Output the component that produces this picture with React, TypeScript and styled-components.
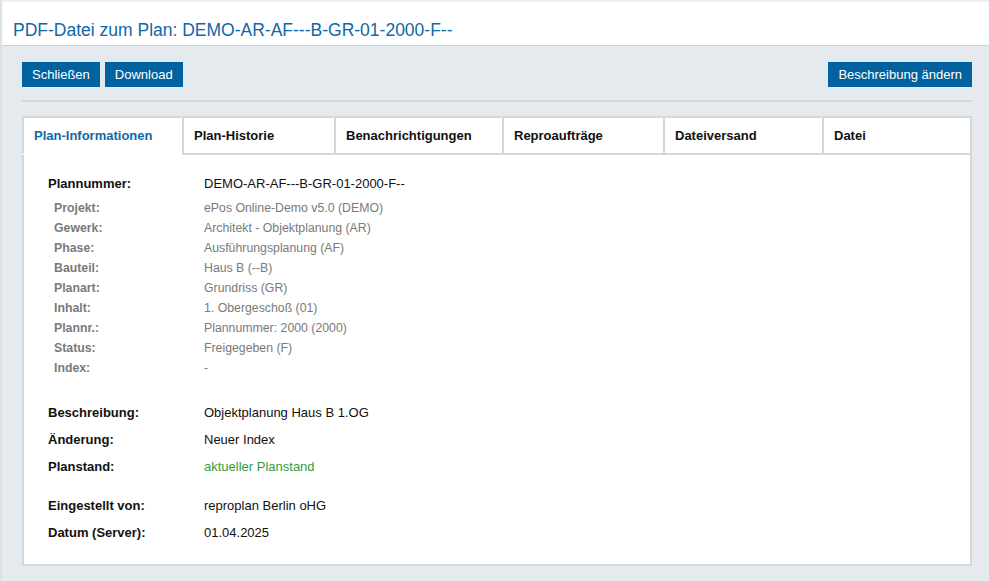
import React from "react";
import styled, { createGlobalStyle } from "styled-components";

const GlobalStyle = createGlobalStyle`
  html, body {
    margin: 0;
    padding: 0;
    background: #e5eaee;
    font-family: "Liberation Sans", Arial, sans-serif;
    font-size: 13px;
  }
`;

const Page = styled.div`
  min-height: 581px;
  border-left: 2px solid #dde1e4;
  box-sizing: border-box;
`;

const Header = styled.header`
  height: 46px;
  background: #fff;
  border-bottom: 1px solid #cdd2d6;
  box-shadow: inset 0 3px 3px -2px #e2e2e2;
  display: flex;
  align-items: center;
  padding: 15px 0 0 11px;
  box-sizing: border-box;
`;

const Title = styled.h1`
  margin: 0;
  font-size: 17.5px;
  font-weight: normal;
  color: #0f68a8;
`;

const Main = styled.main`
  padding: 16px 17px 16px 20px;
`;

const Toolbar = styled.div`
  display: flex;
  align-items: center;
  gap: 5px;
  padding-bottom: 13px;
  border-bottom: 2px solid #d3d7db;
`;

const Spacer = styled.div`
  flex: 1;
`;

const Button = styled.button`
  height: 25px;
  padding: 0 10px;
  border: none;
  border-radius: 0;
  background: #00639f;
  color: #fff;
  font-family: inherit;
  font-size: 13px;
  cursor: pointer;
`;

const Panel = styled.section`
  margin-top: 14px;
  background: #fff;
  border: 2px solid #d4d8db;
  border-top: none;
`;

const TabBar = styled.div`
  display: flex;
  margin-left: -2px;
  margin-right: -2px;
`;

const Tab = styled.div<{ $active?: boolean; $w: number }>`
  width: ${(p) => p.$w}px;
  height: 39px;
  box-sizing: border-box;
  display: flex;
  align-items: center;
  padding-left: 10px;
  font-weight: bold;
  font-size: 13px;
  color: ${(p) => (p.$active ? "#0f68a8" : "#111")};
  border-top: 2px solid #d4d8db;
  border-left: 2px solid #d4d8db;
  border-bottom: 2px solid ${(p) => (p.$active ? "transparent" : "#d4d8db")};
  background: #fff;
  &:last-child {
    flex: 1;
    border-right: 2px solid #d4d8db;
  }
`;

const Content = styled.div`
  padding: 16px 24px 18px 24px;
`;

const Group = styled.div<{ $gap?: number }>`
  margin-top: ${(p) => p.$gap ?? 0}px;
`;

const Row = styled.div<{ $h: number; $sub?: boolean }>`
  display: grid;
  grid-template-columns: ${(p) => (p.$sub ? "150px" : "156px")} 1fr;
  height: ${(p) => p.$h}px;
  align-items: center;
  padding-left: ${(p) => (p.$sub ? 6 : 0)}px;
  font-size: ${(p) => (p.$sub ? 12.3 : 13)}px;
  color: ${(p) => (p.$sub ? "#7a7a7a" : "#111")};
`;

const Label = styled.span`
  font-weight: bold;
`;

const Value = styled.span<{ $green?: boolean }>`
  color: ${(p) => (p.$green ? "#2ea043" : "inherit")};
`;

const tabs = [
  { label: "Plan-Informationen", w: 160, active: true },
  { label: "Plan-Historie", w: 152 },
  { label: "Benachrichtigungen", w: 168 },
  { label: "Reproaufträge", w: 161 },
  { label: "Dateiversand", w: 159 },
  { label: "Datei", w: 149 },
];

const details: [string, string][] = [
  ["Projekt:", "ePos Online-Demo v5.0 (DEMO)"],
  ["Gewerk:", "Architekt - Objektplanung (AR)"],
  ["Phase:", "Ausführungsplanung (AF)"],
  ["Bauteil:", "Haus B (--B)"],
  ["Planart:", "Grundriss (GR)"],
  ["Inhalt:", "1. Obergeschoß (01)"],
  ["Plannr.:", "Plannummer: 2000 (2000)"],
  ["Status:", "Freigegeben (F)"],
  ["Index:", "-"],
];

export default function App() {
  return (
    <>
      <GlobalStyle />
      <Page>
        <Header>
          <Title>PDF-Datei zum Plan: DEMO-AR-AF---B-GR-01-2000-F--</Title>
        </Header>
        <Main>
          <Toolbar>
            <Button>Schließen</Button>
            <Button>Download</Button>
            <Spacer />
            <Button>Beschreibung ändern</Button>
          </Toolbar>
          <Panel>
            <TabBar>
              {tabs.map((t) => (
                <Tab key={t.label} $w={t.w} $active={t.active}>
                  {t.label}
                </Tab>
              ))}
            </TabBar>
            <Content>
              <Row $h={24}>
                <Label>Plannummer:</Label>
                <Value>DEMO-AR-AF---B-GR-01-2000-F--</Value>
              </Row>
              <Group $gap={3}>
                {details.map(([l, v]) => (
                  <Row key={l} $h={20} $sub>
                    <Label>{l}</Label>
                    <Value>{v}</Value>
                  </Row>
                ))}
              </Group>
              <Group $gap={21}>
                <Row $h={27}>
                  <Label>Beschreibung:</Label>
                  <Value>Objektplanung Haus B 1.OG</Value>
                </Row>
                <Row $h={27}>
                  <Label>Änderung:</Label>
                  <Value>Neuer Index</Value>
                </Row>
                <Row $h={27}>
                  <Label>Planstand:</Label>
                  <Value $green>aktueller Planstand</Value>
                </Row>
              </Group>
              <Group $gap={12}>
                <Row $h={27}>
                  <Label>Eingestellt von:</Label>
                  <Value>reproplan Berlin oHG</Value>
                </Row>
                <Row $h={27}>
                  <Label>Datum (Server):</Label>
                  <Value>01.04.2025</Value>
                </Row>
              </Group>
            </Content>
          </Panel>
        </Main>
      </Page>
    </>
  );
}
